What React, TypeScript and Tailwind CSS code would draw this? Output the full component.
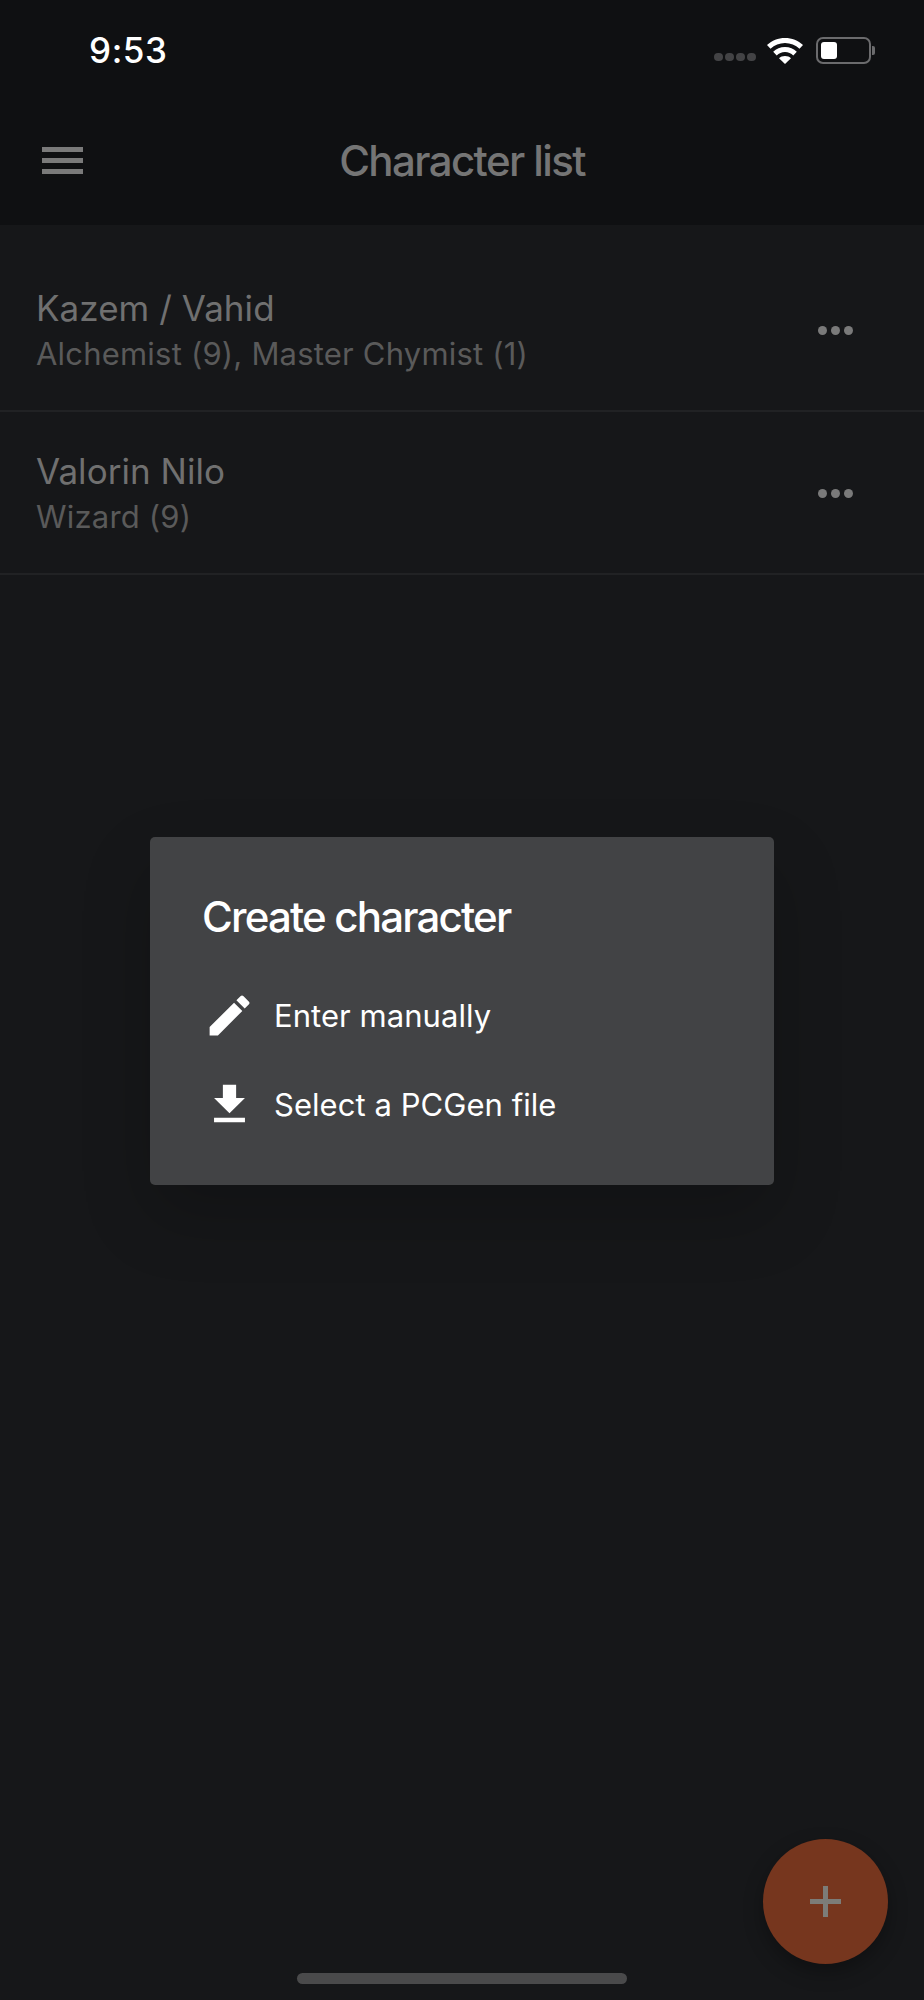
const font = { fontFamily: "Inter, 'Liberation Sans', sans-serif" };

function EditIcon() {
  return (
    <svg viewBox="0 0 24 24" className="w-[53px] h-[53px] fill-white shrink-0">
      <path d="M3 17.25V21h3.75L17.81 9.94l-3.75-3.75L3 17.25zM20.71 7.04a1 1 0 0 0 0-1.41l-2.34-2.34a1 1 0 0 0-1.41 0l-1.83 1.83 3.75 3.75 1.83-1.83z" />
    </svg>
  );
}

function DownloadIcon() {
  return (
    <svg viewBox="0 0 24 24" className="w-[53px] h-[53px] fill-white shrink-0">
      <path d="M19 9h-4V3H9v6H5l7 7 7-7zM5 18v2h14v-2H5z" />
    </svg>
  );
}

function StatusBar() {
  return (
    <div className="h-[100px] flex items-center justify-between pl-[89px] pr-[49px] pt-[1px]">
      <span className="text-[35px] font-medium text-white tracking-[0.6px] leading-none">9:53</span>
      <div className="flex items-center">
        <div className="flex gap-[2px] mt-[12px] mr-[11px]">
          <span className="w-[9px] h-[8px] rounded-full bg-[#434345]" />
          <span className="w-[9px] h-[8px] rounded-full bg-[#434345]" />
          <span className="w-[9px] h-[8px] rounded-full bg-[#434345]" />
          <span className="w-[9px] h-[8px] rounded-full bg-[#434345]" />
        </div>
        <svg viewBox="0 0 36 26" className="w-[36px] h-[26px] fill-white mr-[13px]">
          <path d="M18 0C11 0 5 2.600 0 7l3.500 3.800C7.500 7.200 12.500 5 18 5s10.500 2.200 14.500 5.800L36 7C31 2.600 25 0 18 0z" />
          <path d="M18 9c-4.600 0-8.800 1.800-11.800 4.800l3.500 3.700c2.200-2.100 5-3.400 8.300-3.400s6.100 1.300 8.300 3.400l3.500-3.700C26.800 10.800 22.600 9 18 9z" />
          <path d="M18 18c-2.500 0-4.500 .9-6 2.300L18 26l6-5.700C22.500 18.900 20.500 18 18 18z" />
        </svg>
        <div className="w-[55px] h-[27px] rounded-[7px] border-2 border-[#6b6b6d] p-[3px]">
          <div className="w-[16px] h-full rounded-[3px] bg-white" />
        </div>
        <div className="w-[3px] h-[9px] rounded-r-[2px] bg-[#6b6b6d] ml-[1px]" />
      </div>
    </div>
  );
}

function Header() {
  return (
    <header className="bg-[#0f1012]">
      <StatusBar />
      <div className="relative h-[125px] flex items-center justify-center pb-[4px]">
        <div className="absolute left-[42px] top-[47px] flex flex-col gap-[6px]">
          <span className="w-[41px] h-[5px] bg-[#7a7a7a]" />
          <span className="w-[41px] h-[5px] bg-[#7a7a7a]" />
          <span className="w-[41px] h-[5px] bg-[#7a7a7a]" />
        </div>
        <h1 className="text-[42px] font-medium text-[#757575] tracking-[-1.6px] leading-none">Character list</h1>
      </div>
    </header>
  );
}

function CharacterRow({ name, detail }: { name: string; detail: string }) {
  return (
    <div className="h-[163px] border-b-2 border-[#212224] flex items-center justify-between pl-[36px] pr-[71px]">
      <div className="flex flex-col mt-[2px]">
        <span className="text-[35px] text-[#707070] leading-[46px] tracking-[0.05px]">{name}</span>
        <span className="text-[31px] text-[#5a5a5a] leading-[46px] tracking-[0.2px]">{detail}</span>
      </div>
      <div className="flex gap-[4px] mt-[2px]">
        <span className="w-[9px] h-[9px] rounded-full bg-[#7a7a7a]" />
        <span className="w-[9px] h-[9px] rounded-full bg-[#7a7a7a]" />
        <span className="w-[9px] h-[9px] rounded-full bg-[#7a7a7a]" />
      </div>
    </div>
  );
}

export default function App() {
  return (
    <div className="relative w-[924px] h-[2000px] overflow-hidden bg-[#161719]" style={font}>
      <Header />
      <main className="pt-[24px]">
        <CharacterRow name="Kazem / Vahid" detail="Alchemist (9), Master Chymist (1)" />
        <CharacterRow name="Valorin Nilo" detail="Wizard (9)" />
      </main>

      {/* Dialog */}
      <div className="absolute left-[150px] top-[837px] w-[624px] h-[348px] rounded-[5px] bg-[#424345] shadow-[0_30px_70px_rgba(0,0,0,0.2)] pl-[53px] pt-[55px]">
        <h2 className="text-[42px] font-medium text-white tracking-[-1.8px] leading-[50px] -ml-[1px]">Create character</h2>
        <div className="flex flex-col mt-[29px]">
          <div className="h-[89px] flex items-center gap-[18px]">
            <EditIcon />
            <span className="text-[31px] text-white leading-none tracking-[0.05px]">Enter manually</span>
          </div>
          <div className="h-[89px] flex items-center gap-[18px]">
            <DownloadIcon />
            <span className="text-[31px] text-white leading-none tracking-[0.05px]">Select a PCGen file</span>
          </div>
        </div>
      </div>

      {/* Add button */}
      <div className="absolute left-[763px] top-[1839px] w-[125px] h-[125px] rounded-full bg-[#76361e] shadow-[0_8px_20px_rgba(0,0,0,0.3)] flex items-center justify-center">
        <svg viewBox="0 0 31 31" className="w-[31px] h-[31px] fill-[#7c7c78]">
          <path d="M13 0h5v13h13v5H18v13h-5V18H0v-5h13z" />
        </svg>
      </div>

      {/* Home indicator */}
      <div className="absolute left-[297px] top-[1973px] w-[330px] h-[11px] rounded-full bg-[#4a4a4b]" />
    </div>
  );
}
